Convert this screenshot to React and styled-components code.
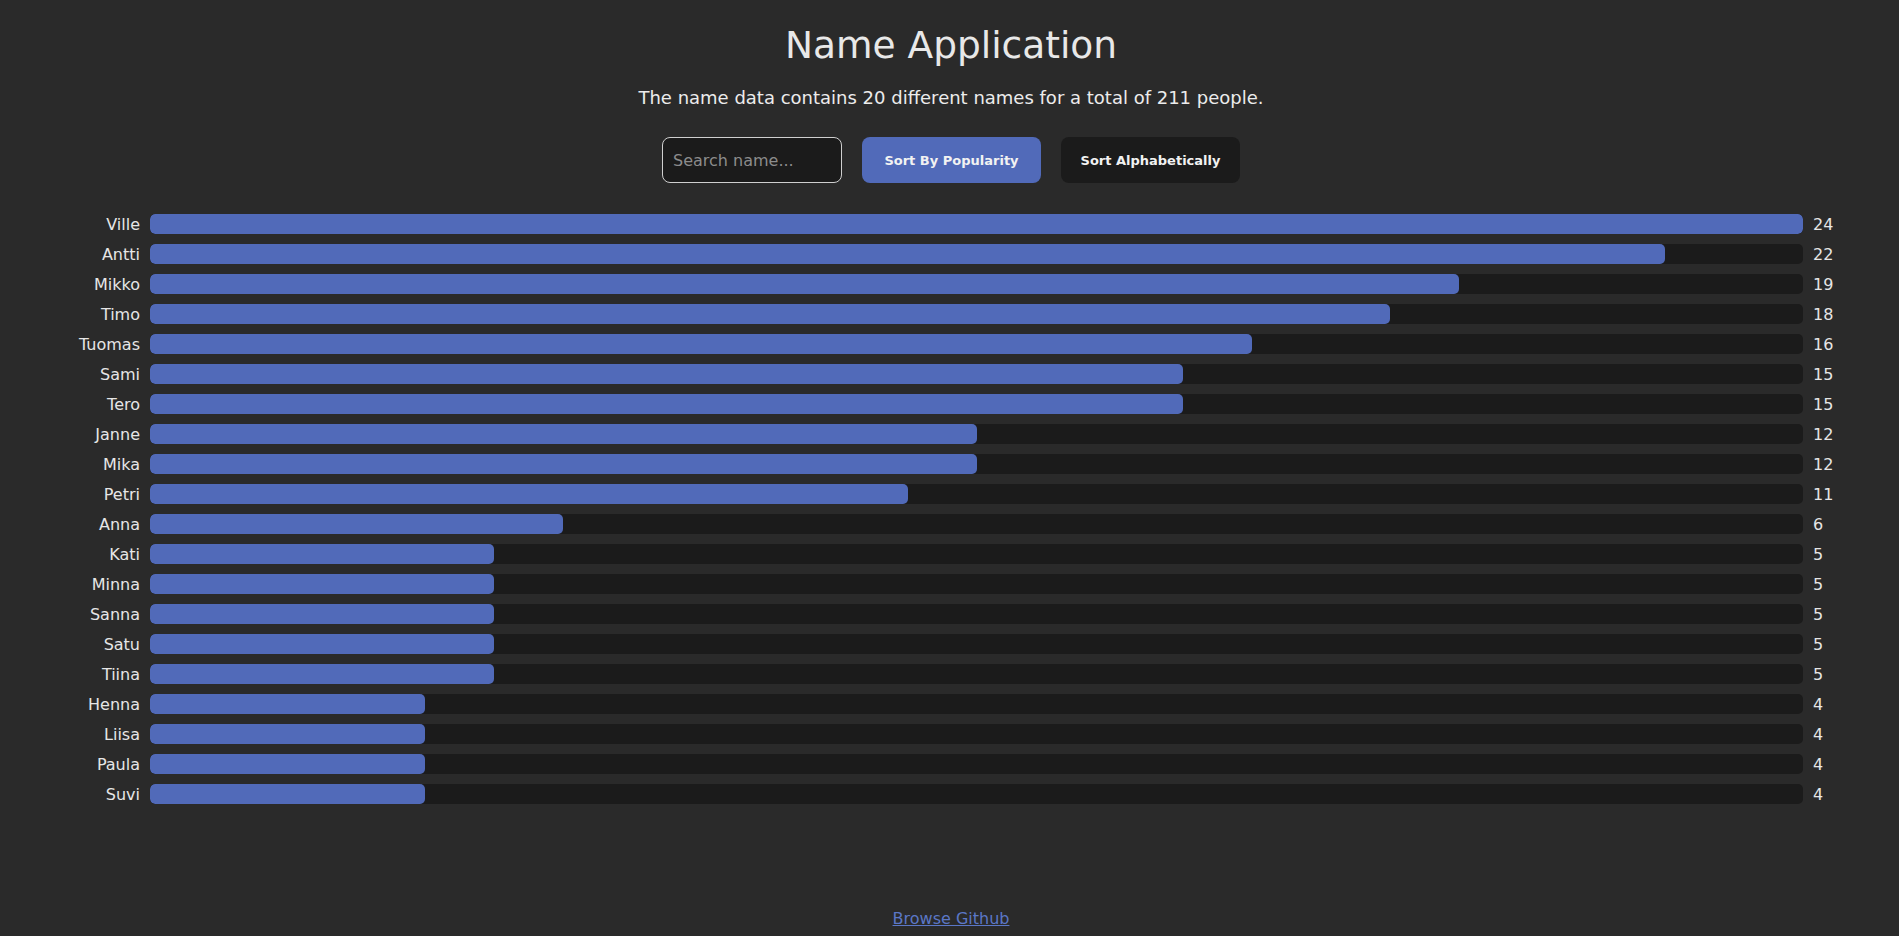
import React, { useState, useMemo } from 'react'
import styled, { createGlobalStyle } from 'styled-components'

const names = [
  { name: 'Ville', amount: 24 },
  { name: 'Antti', amount: 22 },
  { name: 'Mikko', amount: 19 },
  { name: 'Timo', amount: 18 },
  { name: 'Tuomas', amount: 16 },
  { name: 'Sami', amount: 15 },
  { name: 'Tero', amount: 15 },
  { name: 'Janne', amount: 12 },
  { name: 'Mika', amount: 12 },
  { name: 'Petri', amount: 11 },
  { name: 'Anna', amount: 6 },
  { name: 'Kati', amount: 5 },
  { name: 'Minna', amount: 5 },
  { name: 'Sanna', amount: 5 },
  { name: 'Satu', amount: 5 },
  { name: 'Tiina', amount: 5 },
  { name: 'Henna', amount: 4 },
  { name: 'Liisa', amount: 4 },
  { name: 'Paula', amount: 4 },
  { name: 'Suvi', amount: 4 },
]

const GlobalStyle = createGlobalStyle`
  * { box-sizing: border-box; }
  body {
    margin: 0;
    background: #2a2a2a;
    color: #e6e6e6;
    font-family: "DejaVu Sans", Verdana, sans-serif;
  }
`

//ページ全体
const Page = styled.div`
  min-height: 100vh;
  display: flex;
  flex-direction: column;
`

const Header = styled.header`
  text-align: center;
  padding-left: 3px;
`

const Title = styled.h1`
  font-size: 37.5px;
  font-weight: 400;
  margin: 23px 0 0;
  color: #e8e8e8;
`

const Subtitle = styled.p`
  font-size: 18px;
  margin: 20px 0 0;
  color: #ececec;
`

//検索窓とボタン
const Controls = styled.div`
  display: flex;
  justify-content: center;
  gap: 20px;
  margin-top: 29px;
`

const SearchInput = styled.input`
  width: 180px;
  height: 46px;
  padding: 0 10px;
  background: #1b1b1b;
  border: 1px solid #cfcfcf;
  border-radius: 8px;
  color: #e6e6e6;
  font-family: inherit;
  font-size: 16px;
  outline: none;
  &::placeholder {
    color: #8c8c8c;
  }
`

const SortButton = styled.button`
  width: 179px;
  height: 46px;
  border: none;
  border-radius: 8px;
  background: ${({ $active }) => ($active ? '#516ab9' : '#1b1b1b')};
  color: #f2f2f2;
  font-family: inherit;
  font-size: 13px;
  font-weight: 700;
  cursor: pointer;
`

//名前リスト
const List = styled.div`
  display: flex;
  flex-direction: column;
  gap: 10px;
  padding: 0 60px;
  margin-top: 31px;
`

const Row = styled.div`
  display: grid;
  grid-template-columns: 80px 1fr 26px;
  column-gap: 10px;
  align-items: center;
  height: 20px;
  font-size: 16px;
`

const Label = styled.span`
  text-align: right;
  color: #e6e6e6;
`

const Track = styled.div`
  height: 20px;
  background: #1b1b1b;
  border-radius: 5px;
  overflow: hidden;
`

const Fill = styled.div`
  height: 100%;
  background: #516ab9;
  border-radius: 5px;
`

const Amount = styled.span`
  color: #e6e6e6;
`

const Footer = styled.footer`
  margin-top: auto;
  text-align: center;
  padding: 0 0 8px 3px;
`

const GithubLink = styled.a`
  color: #5b77c6;
  font-size: 16px;
`

function App() {
  const [search, setSearch] = useState('')
  const [sortBy, setSortBy] = useState('popularity')

  const total = names.reduce((sum, n) => sum + n.amount, 0)
  const max = Math.max(...names.map(n => n.amount))

  const shown = useMemo(() => {
    const filtered = names.filter(n => n.name.toLowerCase().includes(search.toLowerCase()))
    return [...filtered].sort((a, b) =>
      sortBy === 'popularity'
        ? b.amount - a.amount || a.name.localeCompare(b.name)
        : a.name.localeCompare(b.name)
    )
  }, [search, sortBy])

  return (
    <>
      <GlobalStyle />
      <Page>
        <Header>
          <Title>Name Application</Title>
          <Subtitle>
            The name data contains {names.length} different names for a total of {total} people.
          </Subtitle>
          <Controls>
            <SearchInput
              placeholder="Search name..."
              value={search}
              onChange={e => setSearch(e.target.value)}
            />
            <SortButton $active={sortBy === 'popularity'} onClick={() => setSortBy('popularity')}>
              Sort By Popularity
            </SortButton>
            <SortButton $active={sortBy === 'alphabet'} onClick={() => setSortBy('alphabet')}>
              Sort Alphabetically
            </SortButton>
          </Controls>
        </Header>
        <List>
          {shown.map(n => (
            <Row key={n.name}>
              <Label>{n.name}</Label>
              <Track>
                <Fill style={{ width: `${(n.amount / max) * 100}%` }} />
              </Track>
              <Amount>{n.amount}</Amount>
            </Row>
          ))}
        </List>
        <Footer>
          <GithubLink href="#">Browse Github</GithubLink>
        </Footer>
      </Page>
    </>
  )
}

export default App
